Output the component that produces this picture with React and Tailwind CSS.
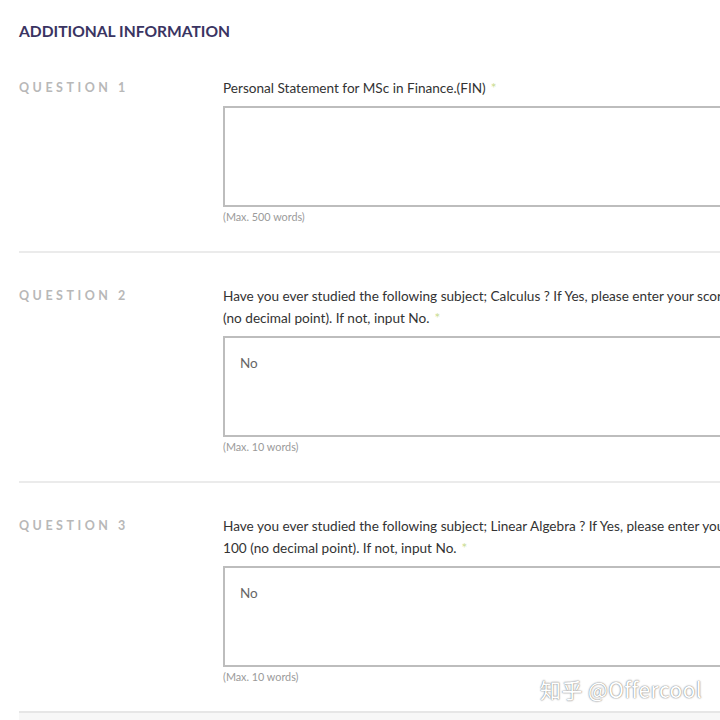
import React from "react";

const font = { fontFamily: "Lato, 'Open Sans', 'Liberation Sans', sans-serif" };

function Star() {
  return <span className="ml-[5px] text-[#c9dc8f]">*</span>;
}

function Section({ label, lines, value, max, first }) {
  return (
    <div className={`flex ${first ? "pt-0" : "pt-[32px] border-t-2 border-[#ebebeb]"} pb-[27px]`}>
      <div className="w-[204px] shrink-0 text-[12.5px] leading-[22px] font-bold tracking-[0.28em] text-[#b8b8b8]">
        {label}
      </div>
      <div className="flex-1 min-w-0">
        <div className="text-[13.6px] leading-[22px] text-[#333] whitespace-nowrap">
          {lines.map((l, i) => (
            <div key={i}>
              {l}
              {i === lines.length - 1 && <Star />}
            </div>
          ))}
        </div>
        <div className="mt-[7px] h-[101px] w-[700px] border-2 border-[#bdbdbd] px-[15px] pt-[15px] text-[13.5px] text-[#666]">
          {value}
        </div>
        <div className="mt-[3px] text-[10.8px] leading-[14px] text-[#9a9a9a]">{max}</div>
      </div>
    </div>
  );
}

export default function App() {
  return (
    <div className="relative w-[720px] h-[720px] overflow-hidden bg-white" style={font}>
      <div className="w-[1000px] pl-[19px]">
        <div className="pt-[21px] text-[15.6px] leading-[20px] font-bold text-[#3a3462]">
          ADDITIONAL INFORMATION
        </div>
        <div className="mt-[36px]">
          <Section
            first
            label="QUESTION 1"
            lines={["Personal Statement for MSc in Finance.(FIN)"]}
            value=""
            max="(Max. 500 words)"
          />
          <Section
            label="QUESTION 2"
            lines={[
              "Have you ever studied the following subject; Calculus ? If Yes, please enter your score out of 100",
              "(no decimal point). If not, input No.",
            ]}
            value="No"
            max="(Max. 10 words)"
          />
          <Section
            label="QUESTION 3"
            lines={[
              "Have you ever studied the following subject; Linear Algebra ? If Yes, please enter your score out of",
              "100 (no decimal point). If not, input No.",
            ]}
            value="No"
            max="(Max. 10 words)"
          />
          <div className="border-t-2 border-[#e6e6e6] h-[20px] bg-[#f7f7f7]" />
        </div>
      </div>
      <div
        className="absolute left-[540px] top-[675px] text-[21px] leading-[28px] text-white tracking-[0.02em] whitespace-nowrap"
        style={{ fontFamily: "'Noto Sans CJK SC', 'Noto Sans', sans-serif", textShadow: "0 0 1px #777, 0 0 2px #999" }}
      >
        知乎 @Offercool
      </div>
    </div>
  );
}
